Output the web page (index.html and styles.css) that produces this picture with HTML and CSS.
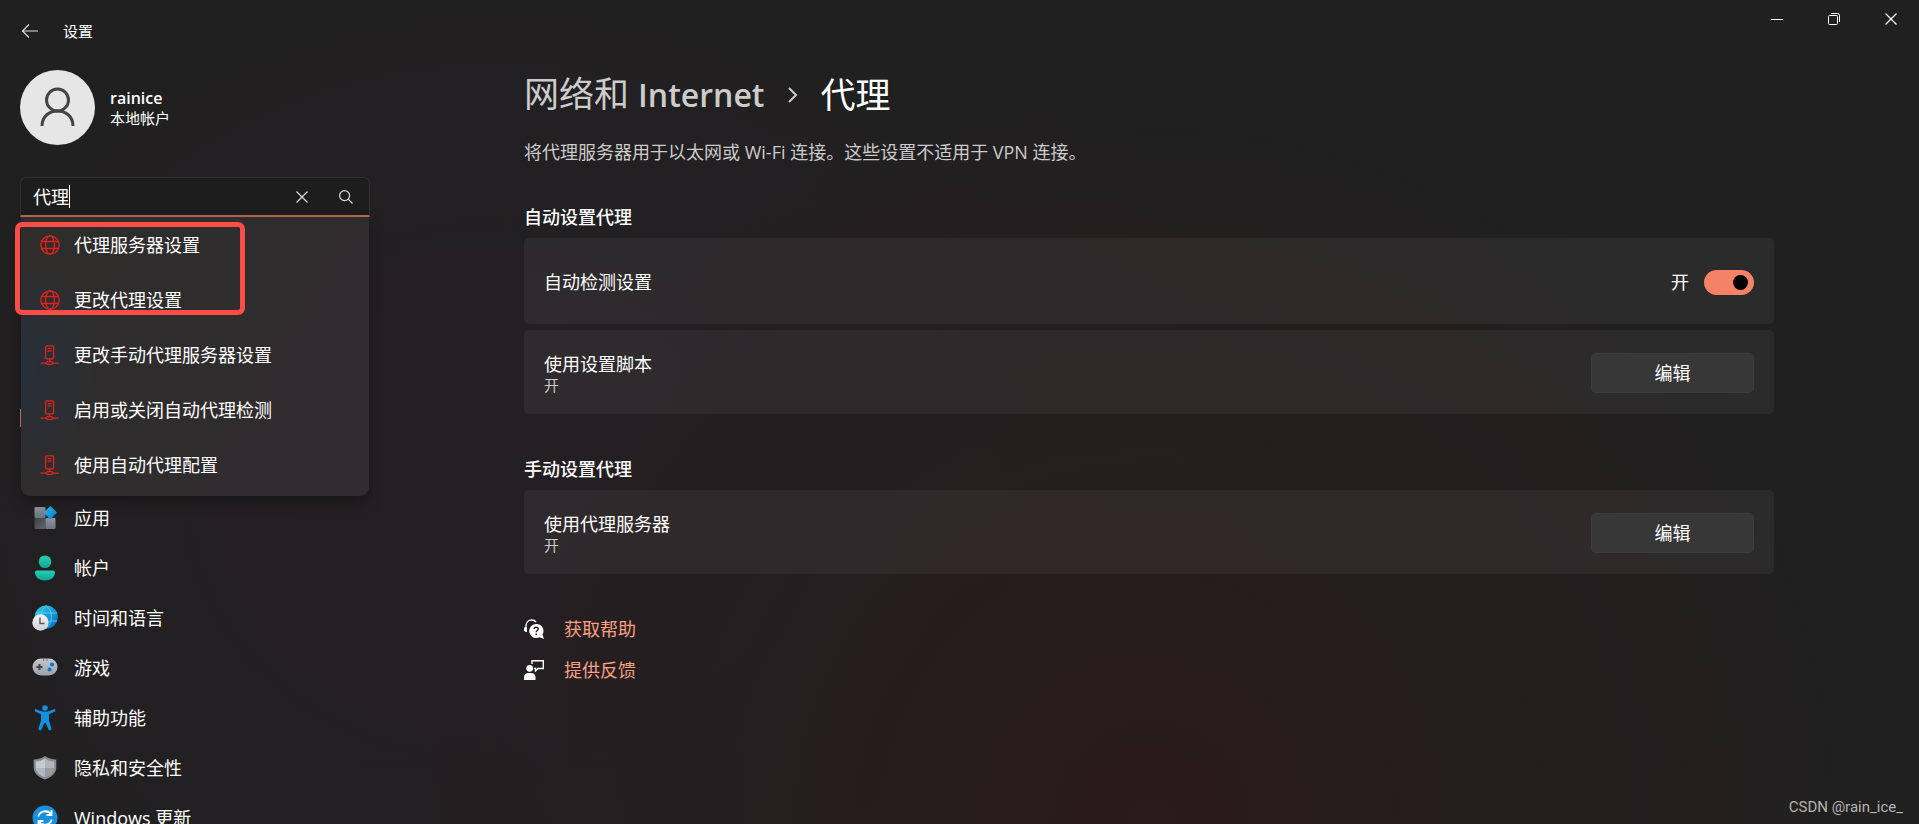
FILE: index.html
```html
<!DOCTYPE html>
<html lang="zh-CN">
<head>
    <meta charset="UTF-8">
    <meta name="viewport" content="width=device-width, initial-scale=1.0">
    <title>设置</title>
    <link rel="stylesheet" href="styles.css">
</head>
<body>
    <!-- shared icons -->
    <svg class="sprite" aria-hidden="true">
        <symbol id="globe" viewBox="0 0 20 20">
            <g fill="none" stroke="currentColor" stroke-width="1.3">
                <circle cx="10" cy="10" r="9.2"/>
                <ellipse cx="10" cy="10" rx="4.4" ry="9.2"/>
                <path d="M1.6 6.5h16.8M1.6 13.5h16.8"/>
            </g>
        </symbol>
        <symbol id="server" viewBox="0 0 20 20">
            <g fill="none" stroke="currentColor" stroke-width="1.3">
                <rect x="5.6" y=".8" width="8" height="13" rx="1"/>
                <path d="M7.5 3.6h4.2M7.5 6.2h4.2M9.6 14v2.4M.5 18.2h5M13.7 18.2h5M7.4 16.6h4.4l1.7 1.6-1.7 1.2H7.4l-1.7-1.2z"/>
            </g>
        </symbol>
    </svg>

    <header class="titlebar">
        <button class="back" aria-label="返回">
            <svg width="18" height="16" viewBox="0 0 18 16" fill="none" stroke="#ddd" stroke-width="1.2"><path d="M17 8H1.5M8 1.5L1.5 8 8 14.5"/></svg>
        </button>
        <span class="app-name">设置</span>
        <div class="window-buttons">
            <button aria-label="最小化"><svg width="12" height="12" viewBox="0 0 12 12" stroke="#fff"><path d="M0 6.5h12"/></svg></button>
            <button aria-label="还原"><svg width="12" height="12" viewBox="0 0 12 12" fill="none" stroke="#fff"><rect x=".5" y="2.5" width="9" height="9" rx="1"/><path d="M3 .5h6.5a2 2 0 0 1 2 2V9"/></svg></button>
            <button aria-label="关闭"><svg width="12" height="12" viewBox="0 0 12 12" stroke="#fff" stroke-width="1.2"><path d="M.5.5l11 11M11.5.5l-11 11"/></svg></button>
        </div>
    </header>

    <div class="layout">
        <aside class="sidebar">
            <div class="profile">
                <svg class="avatar" viewBox="0 0 75 75">
                    <circle cx="37.5" cy="37.5" r="37.5" fill="#e6e6e6"/>
                    <g fill="none" stroke="#444" stroke-width="3"><circle cx="37.5" cy="30" r="11"/><path d="M22 56c0-20 31-20 31 0"/></g>
                </svg>
                <div>
                    <div class="profile-name">rainice</div>
                    <div class="profile-type">本地帐户</div>
                </div>
            </div>

            <form class="search">
                <input type="text" value="代理" aria-label="查找设置" size="2">
                <span class="caret"></span>
                <button type="reset" aria-label="清除"><svg width="12" height="12" viewBox="0 0 12 12" stroke="#ddd" stroke-width="1.2"><path d="M.5.5l11 11M11.5.5l-11 11"/></svg></button>
                <button type="submit" aria-label="搜索"><svg width="14" height="14" viewBox="0 0 14 14" fill="none" stroke="#ddd" stroke-width="1.2"><circle cx="5.6" cy="5.6" r="5"/><path d="M9.2 9.2l4.3 4.3"/></svg></button>
            </form>

            <div class="results">
                <a href="#"><svg><use href="#globe"/></svg>代理服务器设置</a>
                <a href="#"><svg><use href="#globe"/></svg>更改代理设置</a>
                <a href="#"><svg><use href="#server"/></svg>更改手动代理服务器设置</a>
                <a href="#"><svg><use href="#server"/></svg>启用或关闭自动代理检测</a>
                <a href="#"><svg><use href="#server"/></svg>使用自动代理配置</a>
                <div class="highlight"></div>
                <div class="active-mark"></div>
            </div>

            <nav class="nav">
                <a href="#">
                    <svg viewBox="0 0 26 26">
                        <defs>
                            <linearGradient id="tile" x2="0" y2="1"><stop stop-color="#8d95a0"/><stop offset="1" stop-color="#6c747e"/></linearGradient>
                            <linearGradient id="dark" x2="1" y2="1"><stop stop-color="#3d4247"/><stop offset="1" stop-color="#60666c"/></linearGradient>
                            <linearGradient id="blue" x2="1" y2="1"><stop stop-color="#35c1f1"/><stop offset="1" stop-color="#0078d7"/></linearGradient>
                        </defs>
                        <rect x="2.5" y="2" width="11" height="11" rx="1" fill="url(#tile)"/>
                        <rect x="2.5" y="13" width="11" height="11" rx="1" fill="url(#dark)"/>
                        <rect x="13.5" y="13" width="10" height="11" rx="1" fill="url(#tile)"/>
                        <path d="M17.5 1.8q.9-.9 1.800 0l5 5q.9.900 0 1.800l-5 5q-.9.900-1.800 0l-5-5q-.9-.9 0-1.800z" fill="url(#blue)"/>
                    </svg>应用</a>
                <a href="#">
                    <svg viewBox="0 0 26 26">
                        <defs><linearGradient id="teal" x2="0" y2="1"><stop stop-color="#25d0b5"/><stop offset="1" stop-color="#10a58f"/></linearGradient></defs>
                        <circle cx="13" cy="6.8" r="6.3" fill="url(#teal)"/>
                        <path d="M5 15.500h16q2 0 2 2c0 5-4.500 8-10 8s-10-3-10-8q0-2 2-2z" fill="url(#teal)"/>
                    </svg>帐户</a>
                <a href="#">
                    <svg viewBox="0 0 26 26">
                        <defs>
                            <linearGradient id="earth" x2="1" y2="1"><stop stop-color="#2fd0e8"/><stop offset="1" stop-color="#0868c4"/></linearGradient>
                            <linearGradient id="clock" x2="0" y2="1"><stop stop-color="#f6f6f6"/><stop offset="1" stop-color="#cdcfd2"/></linearGradient>
                        </defs>
                        <circle cx="14.3" cy="12" r="11.5" fill="url(#earth)"/>
                        <path d="M3.5 8h21.6M12 16h13M14.3.5c-7 6-7 17 0 23M14.3.5c7 6 7 17 0 23" fill="none" stroke="#5fe0f4" opacity=".7"/>
                        <circle cx="8.5" cy="17.5" r="8.2" fill="url(#clock)"/>
                        <path d="M8 12.500v6h4.500" fill="none" stroke="#555" stroke-width="1.4"/>
                    </svg>时间和语言</a>
                <a href="#">
                    <svg viewBox="0 0 26 26">
                        <defs><linearGradient id="pad" x2="0" y2="1"><stop stop-color="#c4c9ce"/><stop offset="1" stop-color="#9aa1a9"/></linearGradient></defs>
                        <rect x=".5" y="3.500" width="25" height="17" rx="8.5" fill="url(#pad)"/>
                        <path d="M4.500 12h6M7.500 9v6" stroke="#444" stroke-width="2"/>
                        <circle cx="20" cy="9.5" r="2" fill="#0b74d1"/><circle cx="17.5" cy="14.5" r="2" fill="#0b74d1"/>
                        <path d="M11 5h1.2M14.5 5h1.2" stroke="#444" stroke-width="1.2"/>
                    </svg>游戏</a>
                <a href="#">
                    <svg viewBox="0 0 26 26">
                        <g fill="#1590e0">
                            <circle cx="13" cy="3" r="2.8"/>
                            <path d="M4.3 4.2c2.8 1.3 5.7 2.4 8.7 2.4s5.9-1.1 8.7-2.4c1.600-.7 2.300 1.700.8 2.500L17 9.200v6.300l2.500 8c.4 1.800-2.300 2.700-3 .9L13.700 18h-1.400l-2.800 6.400c-.7 1.800-3.400.9-3-.9l2.500-8V9.200L3.500 6.700c-1.500-.8-.8-3.200.8-2.500z"/>
                        </g>
                    </svg>辅助功能</a>
                <a href="#">
                    <svg viewBox="0 0 26 26">
                        <path d="M13 1c3 2.500 7 3.300 11.300 3.500V12c0 6-4 10-11.300 12.500C5.700 22 1.700 18 1.700 12V4.500C6 4.300 10 3.500 13 1z" fill="#868c92"/>
                        <path d="M13 3.500C10 5.500 7 6.300 3.800 6.500V13H13z" fill="#c6cacd"/>
                        <path d="M13 3.500c3 2 6 2.800 9.200 3V13H13z" fill="#b0b5ba"/>
                        <path d="M3.800 13c.2 4.500 3.700 7.400 9.200 9.300V13z" fill="#b3b8bc"/>
                        <path d="M22.200 13c-.2 4.500-3.700 7.400-9.200 9.300V13z" fill="#979da3"/>
                    </svg>隐私和安全性</a>
                <a href="#">
                    <svg viewBox="0 0 26 26">
                        <circle cx="13" cy="13" r="12.5" fill="#1790df"/>
                        <path d="M6.300 11.500c1.500-6 9.500-7 12.700-2.200M19.500 5v5h-5M19.700 14.500c-1.500 6-9.500 7-12.700 2.200M6.500 21v-5h5" fill="none" stroke="#fff" stroke-width="1.8"/>
                    </svg>Windows 更新</a>
            </nav>
        </aside>

        <main class="main">
            <div class="content">
                <h1><a href="#">网络和 <b>Internet</b></a><svg width="10" height="16" viewBox="0 0 10 16" fill="none" stroke="#ccc" stroke-width="2"><path d="M1 1l7 7-7 7"/></svg><span>代理</span></h1>
                <p class="description">将代理服务器用于以太网或 Wi-Fi 连接。这些设置不适用于 VPN 连接。</p>

                <h2>自动设置代理</h2>
                <div class="card card-toggle">
                    <label for="autoDetect">自动检测设置</label>
                    <div class="toggle">
                        <span>开</span>
                        <input type="checkbox" id="autoDetect" checked>
                    </div>
                </div>
                <div class="card">
                    <div>
                        <div>使用设置脚本</div>
                        <div class="state">开</div>
                    </div>
                    <button class="edit">编辑</button>
                </div>

                <h2 class="manual">手动设置代理</h2>
                <div class="card">
                    <div>
                        <div>使用代理服务器</div>
                        <div class="state">开</div>
                    </div>
                    <button class="edit">编辑</button>
                </div>

                <div class="links">
                    <a href="#">
                        <svg viewBox="0 0 20 20">
                            <path d="M2 11V7.500C2 3.500 4.500 1 7.500 1 9.500 1 11 1.600 12 3" fill="none" stroke="#fff" stroke-width="1.3"/>
                            <path d="M0 8.500h3v4.500H1.500L0 11.500z" fill="#fff"/>
                            <path d="M12 5a7 7 0 1 0 3.500 13.200L20 20l-1.500-4.500A7 7 0 0 0 12 5z" fill="#fff"/>
                            <path d="M10.200 10c0-2.500 4-2.300 4 0 0 1.500-2 1.500-2 3.200M12.200 14.500V16" fill="none" stroke="#231f21" stroke-width="1.4"/>
                        </svg>获取帮助</a>
                    <a href="#">
                        <svg viewBox="0 0 20 20">
                            <circle cx="5.7" cy="8.3" r="3.4" fill="#fff"/>
                            <path d="M0 20v-2.500q0-4.500 4.500-4.500H7q4.500 0 4.500 4.500V20z" fill="#fff"/>
                            <path d="M8 4V.8h11.300v7.700H14l-2.500 2.300V8.500H10" fill="none" stroke="#fff" stroke-width="1.4"/>
                        </svg>提供反馈</a>
                </div>
            </div>
        </main>
    </div>
    <div class="watermark">CSDN @rain_ice_</div>
</body>
</html>
```

FILE: styles.css
```css
* {
    box-sizing: border-box;
}
body {
    margin: 0;
    height: 100vh;
    overflow: hidden;
    color: #fff;
    font: 18px/24px "Open Sans", "Noto Sans CJK SC", sans-serif;
    background: radial-gradient(ellipse 38% 90% at 60% 100%, #2a1b1d, rgba(42, 27, 29, 0) 100%),
        radial-gradient(ellipse 40% 80% at 26% 60%, #241f23, rgba(36, 31, 35, 0) 100%),
        #202020;
}
a {
    color: inherit;
    text-decoration: none;
}
button {
    display: flex;
    align-items: center;
    justify-content: center;
    padding: 0;
    border: none;
    background: none;
    color: inherit;
    font: inherit;
}
.sprite {
    display: none;
}

/* title bar */
.titlebar {
    display: flex;
    align-items: center;
    height: 62px;
    padding-left: 10px;
}
.back {
    width: 40px;
    height: 40px;
}
.app-name {
    margin-left: 13px;
    font-size: 15px;
    line-height: 20px;
}
.window-buttons {
    display: flex;
    align-self: flex-start;
    margin-left: auto;
}
.window-buttons button {
    width: 57px;
    height: 38px;
}

.layout {
    display: flex;
}

/* sidebar */
.sidebar {
    width: 379px;
    flex-shrink: 0;
    padding: 8px 9px 0 20px;
}
.profile {
    display: flex;
    align-items: center;
    gap: 15px;
}
.avatar {
    width: 75px;
    height: 75px;
}
.profile-name {
    font-size: 16px;
    font-weight: 600;
    line-height: 20px;
}
.profile-type {
    font-size: 15px;
    line-height: 20px;
}
.search {
    display: flex;
    align-items: center;
    height: 40px;
    margin-top: 32px;
    padding: 0 1px 0 12px;
    border: 1px solid #303030;
    border-bottom: 2px solid #bd6650;
    border-radius: 6px 6px 0 0;
    background: #1d1d1d;
}
.search input {
    width: 36px;
    padding: 0;
    border: none;
    outline: none;
    background: none;
    color: #fff;
    font: inherit;
}
.caret {
    width: 1px;
    height: 23px;
    margin-right: auto;
    background: #fff;
}
.search button {
    width: 44px;
    height: 30px;
}
.results {
    position: relative;
    margin: 0 1px;
    padding-bottom: 4px;
    border-radius: 0 0 9px 9px;
    background: radial-gradient(ellipse 80px 110px at 0 150px, #26303a, rgba(38, 48, 58, 0)),
        linear-gradient(120deg, #2f2d2b, #2e2c2d 50%, #322c31);
    box-shadow: 0 6px 14px rgba(0, 0, 0, 0.3);
}
.results a {
    display: flex;
    align-items: center;
    gap: 14px;
    height: 55px;
    padding-left: 19px;
}
.results svg {
    width: 20px;
    height: 20px;
    color: #e0231c;
}
.highlight {
    position: absolute;
    top: 5px;
    left: -6px;
    width: 230px;
    height: 93px;
    border: 5px solid #fa4d48;
    border-radius: 7px;
}
.active-mark {
    position: absolute;
    top: 192px;
    left: -1px;
    width: 1px;
    height: 18px;
    background: #bd6650;
}
.nav {
    display: flex;
    flex-direction: column;
    gap: 6px;
}
.nav a {
    display: flex;
    align-items: center;
    gap: 16px;
    height: 44px;
    padding-left: 12px;
}
.nav svg {
    width: 26px;
    height: 26px;
}

/* page */
.main {
    flex: 1;
}
.content {
    max-width: 1250px;
    margin: 0 auto;
}
h1 {
    display: flex;
    align-items: center;
    gap: 23px;
    margin: 8px 0 0;
    font-size: 35px;
    font-weight: 400;
    line-height: 48px;
}
h1 a {
    color: #ccc;
}
h1 b {
    font-size: 32px;
    font-weight: 600;
}
.description {
    margin: 21px 0 0;
    color: #ccc;
}
h2 {
    margin: 41px 0 9px;
    font-size: 18px;
    font-weight: 500;
    line-height: 24px;
}
h2.manual {
    margin-top: 43px;
}
.card {
    display: flex;
    align-items: center;
    justify-content: space-between;
    height: 84px;
    padding: 2px 20px 0;
    border-radius: 5px;
    background: rgba(255, 255, 255, 0.05);
}
.card-toggle {
    height: 86px;
    margin-bottom: 6px;
}
.state {
    color: #ccc;
    font-size: 15px;
    line-height: 18px;
}
.toggle {
    display: flex;
    align-items: center;
    gap: 15px;
}
.toggle input {
    appearance: none;
    display: flex;
    align-items: center;
    justify-content: flex-end;
    width: 50px;
    height: 25px;
    margin: 0;
    padding: 0 6px;
    border-radius: 13px;
    background: #f48267;
}
.toggle input::before {
    content: "";
    width: 15px;
    height: 15px;
    border-radius: 50%;
    background: #000;
}
.edit {
    width: 163px;
    height: 40px;
    border: 1px solid #3d3d3d;
    border-radius: 5px;
    background: #373737;
}
.links {
    display: flex;
    flex-direction: column;
    align-items: flex-start;
    gap: 17px;
    margin-top: 43px;
    color: #f9a083;
}
.links a {
    display: flex;
    align-items: center;
    gap: 20px;
}
.links svg {
    width: 20px;
    height: 20px;
}
.watermark {
    position: absolute;
    right: 16px;
    bottom: 7px;
    color: #b5b5b5;
    font: 15px/20px Roboto, sans-serif;
}
```
